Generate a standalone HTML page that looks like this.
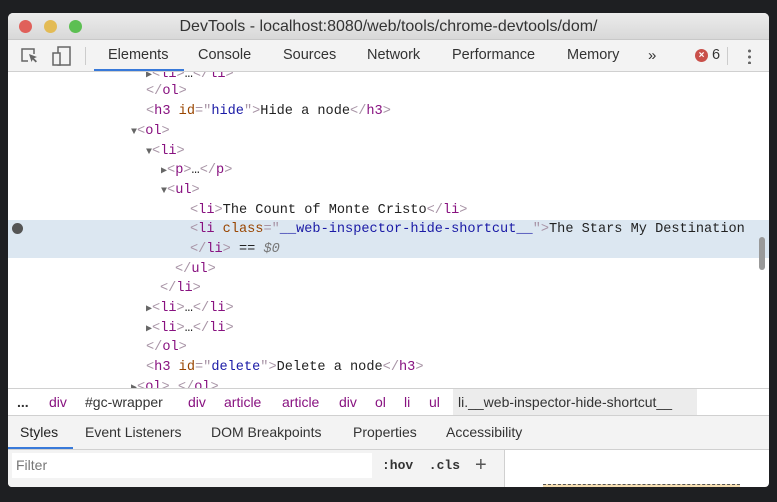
<!DOCTYPE html>
<html><head><meta charset="utf-8"><style>
*{margin:0;padding:0;box-sizing:border-box}
body{width:777px;height:502px;background:#1e1f22;position:relative;overflow:hidden;font-family:"Liberation Sans",sans-serif}
.win{position:absolute;left:8px;top:13px;width:761px;height:474px;background:#fff;border-radius:5px 5px 4px 4px;overflow:hidden}
.title{position:absolute;left:0;top:0;width:100%;height:27px;background:linear-gradient(#ececec,#d8d8d8);border-bottom:1px solid #c8c8c8;text-align:center;font-size:16px;line-height:27px;color:#333}
.dot{position:absolute;top:7px;width:13px;height:13px;border-radius:50%}
.tb{position:absolute;left:0;top:27px;width:100%;height:32px;background:#f3f3f3;border-bottom:1px solid #d0d0d0}
.tab{position:absolute;top:0;line-height:31px;font-size:14.5px;color:#333}
.dom{position:absolute;left:0;top:59px;width:761px;height:316px;overflow:hidden;background:#fff}
.ln{position:absolute;height:19.7px;line-height:19.7px;font-family:"Liberation Mono",monospace;font-size:13.6px;white-space:pre;color:#222}
.b{color:#a894a6}.t{color:#881280}.a{color:#994500}.v{color:#1a1aa6}
.ar{color:#666;font-size:10px}
.bc{position:absolute;left:0;top:375px;width:100%;height:28px;border-top:1px solid #d0d0d0;border-bottom:1px solid #d0d0d0;background:#fff;font-size:14px;line-height:27px}
.bc span{position:absolute;top:0;color:#881280}
.st{position:absolute;left:0;top:403px;width:100%;height:34px;background:#f3f3f3;border-bottom:1px solid #d0d0d0;font-size:14px;color:#333}
.st span{position:absolute;line-height:32px;top:0}
</style></head><body>
<div class="win">
 <div class="title">DevTools - localhost:8080/web/tools/chrome-devtools/dom/
  <div class="dot" style="left:11px;background:#e0605a"></div>
  <div class="dot" style="left:36px;background:#e3bb55"></div>
  <div class="dot" style="left:61px;background:#5cbf52"></div>
 </div>
 <div class="tb">
  <svg style="position:absolute;left:12px;top:7px" width="20" height="18" viewBox="0 0 20 18"><path d="M8 14H2V2h12v5" fill="none" stroke="#666" stroke-width="1.5"/><path d="M9 7l8 3-3 1.2 3 3-1.3 1.3-3-3L11.5 15z" fill="#666"/></svg>
  <svg style="position:absolute;left:44px;top:5px" width="20" height="22" viewBox="0 0 20 22"><rect x="6" y="2" width="12" height="18" fill="none" stroke="#666" stroke-width="1.5"/><rect x="1" y="8" width="7" height="12" fill="#f3f3f3" stroke="#666" stroke-width="1.5"/></svg>
  <div style="position:absolute;left:77px;top:7px;width:1px;height:18px;background:#ccc"></div>
  <div class="tab" style="left:100px">Elements</div>
  <div style="position:absolute;left:86px;top:29px;width:90px;height:2px;background:#3879d9"></div>
  <div class="tab" style="left:190px">Console</div>
  <div class="tab" style="left:275px">Sources</div>
  <div class="tab" style="left:359px">Network</div>
  <div class="tab" style="left:444px">Performance</div>
  <div class="tab" style="left:559px">Memory</div>
  <div class="tab" style="left:640px;font-size:15px">»</div>
  <div style="position:absolute;left:687px;top:9px;width:13px;height:13px;border-radius:50%;background:#c9504a;color:#fff;font-size:10px;line-height:13px;text-align:center;font-weight:bold">×</div>
  <div class="tab" style="left:704px">6</div>
  <div style="position:absolute;left:719px;top:7px;width:1px;height:18px;background:#ccc"></div>
  <div style="position:absolute;left:740px;top:8px;width:3px;height:16px;background:radial-gradient(circle,#666 1.4px,transparent 1.6px) 0 0/3px 6px"></div>
 </div>
 <div class="dom">
  <div style="position:absolute;left:0;top:148px;width:761px;height:38px;background:#dce7f1"></div>
  <div style="position:absolute;left:4px;top:151px;width:11px;height:11px;border-radius:50%;background:#555"></div>
  <div style="position:absolute;left:751px;top:165px;width:6px;height:33px;border-radius:3px;background:#999"></div>
  <div class="ln" style="left:138px;top:-7px"><span class="ar">▶</span><span class="b">&lt;</span><span class="t">li</span><span class="b">&gt;</span>…<span class="b">&lt;/</span><span class="t">li</span><span class="b">&gt;</span></div>
  <div class="ln" style="left:138px;top:10px"><span class="b">&lt;/</span><span class="t">ol</span><span class="b">&gt;</span></div>
  <div class="ln" style="left:138px;top:30px"><span class="b">&lt;</span><span class="t">h3</span> <span class="a">id</span><span class="b">="</span><span class="v">hide</span><span class="b">"&gt;</span>Hide a node<span class="b">&lt;/</span><span class="t">h3</span><span class="b">&gt;</span></div>
  <div class="ln" style="left:123px;top:50px"><span class="ar">▼</span><span class="b">&lt;</span><span class="t">ol</span><span class="b">&gt;</span></div>
  <div class="ln" style="left:138px;top:70px"><span class="ar">▼</span><span class="b">&lt;</span><span class="t">li</span><span class="b">&gt;</span></div>
  <div class="ln" style="left:153px;top:89px"><span class="ar">▶</span><span class="b">&lt;</span><span class="t">p</span><span class="b">&gt;</span>…<span class="b">&lt;/</span><span class="t">p</span><span class="b">&gt;</span></div>
  <div class="ln" style="left:153px;top:109px"><span class="ar">▼</span><span class="b">&lt;</span><span class="t">ul</span><span class="b">&gt;</span></div>
  <div class="ln" style="left:182px;top:129px"><span class="b">&lt;</span><span class="t">li</span><span class="b">&gt;</span>The Count of Monte Cristo<span class="b">&lt;/</span><span class="t">li</span><span class="b">&gt;</span></div>
  <div class="ln" style="left:182px;top:148px"><span class="b">&lt;</span><span class="t">li</span> <span class="a">class</span><span class="b">="</span><span class="v">__web-inspector-hide-shortcut__</span><span class="b">"&gt;</span>The Stars My Destination</div>
  <div class="ln" style="left:182px;top:168px"><span class="b">&lt;/</span><span class="t">li</span><span class="b">&gt;</span> == <i style="color:#777">$0</i></div>
  <div class="ln" style="left:167px;top:188px"><span class="b">&lt;/</span><span class="t">ul</span><span class="b">&gt;</span></div>
  <div class="ln" style="left:152px;top:207px"><span class="b">&lt;/</span><span class="t">li</span><span class="b">&gt;</span></div>
  <div class="ln" style="left:138px;top:227px"><span class="ar">▶</span><span class="b">&lt;</span><span class="t">li</span><span class="b">&gt;</span>…<span class="b">&lt;/</span><span class="t">li</span><span class="b">&gt;</span></div>
  <div class="ln" style="left:138px;top:247px"><span class="ar">▶</span><span class="b">&lt;</span><span class="t">li</span><span class="b">&gt;</span>…<span class="b">&lt;/</span><span class="t">li</span><span class="b">&gt;</span></div>
  <div class="ln" style="left:138px;top:266px"><span class="b">&lt;/</span><span class="t">ol</span><span class="b">&gt;</span></div>
  <div class="ln" style="left:138px;top:286px"><span class="b">&lt;</span><span class="t">h3</span> <span class="a">id</span><span class="b">="</span><span class="v">delete</span><span class="b">"&gt;</span>Delete a node<span class="b">&lt;/</span><span class="t">h3</span><span class="b">&gt;</span></div>
  <div class="ln" style="left:123px;top:306px"><span class="ar">▶</span><span class="b">&lt;</span><span class="t">ol</span><span class="b">&gt;</span>…<span class="b">&lt;/</span><span class="t">ol</span><span class="b">&gt;</span></div>
 </div>
 <div class="bc">
  <span style="left:9px;color:#333;font-weight:bold">...</span>
  <span style="left:41px">div</span>
  <span style="left:77px;color:#333">#gc-wrapper</span>
  <span style="left:180px">div</span>
  <span style="left:216px">article</span>
  <span style="left:274px">article</span>
  <span style="left:331px">div</span>
  <span style="left:367px">ol</span>
  <span style="left:396px">li</span>
  <span style="left:421px">ul</span>
  <span style="left:445px;width:244px;height:26px;background:#ececec"></span>
  <span style="left:450px;color:#333">li.__web-inspector-hide-shortcut__</span>
 </div>
 <div class="st">
  <span style="left:12px;color:#222">Styles</span>
  <span style="left:77px">Event Listeners</span>
  <span style="left:203px">DOM Breakpoints</span>
  <span style="left:345px">Properties</span>
  <span style="left:438px">Accessibility</span>
  <span style="left:0;top:31px;width:65px;height:2px;background:#3879d9"></span>
 </div>
 <div style="position:absolute;left:0;top:437px;width:497px;height:37px;background:#f3f3f3;border-right:1px solid #d0d0d0">
  <div style="position:absolute;left:4px;top:3px;width:360px;height:25px;background:#fff;font-size:14px;line-height:25px;padding-left:4px;color:#777">Filter</div>
  <div style="position:absolute;left:374px;top:3px;font-family:'Liberation Mono',monospace;font-size:13px;line-height:25px;color:#333;font-weight:bold">:hov&nbsp;&nbsp;.cls</div>
  <div style="position:absolute;left:467px;top:3px;font-size:20px;line-height:25px;color:#555">+</div>
 </div>
 <div style="position:absolute;left:535px;top:471px;width:197px;height:4px;border-top:1px dashed #555;background:#f5deb3"></div>
</div>
</body></html>
